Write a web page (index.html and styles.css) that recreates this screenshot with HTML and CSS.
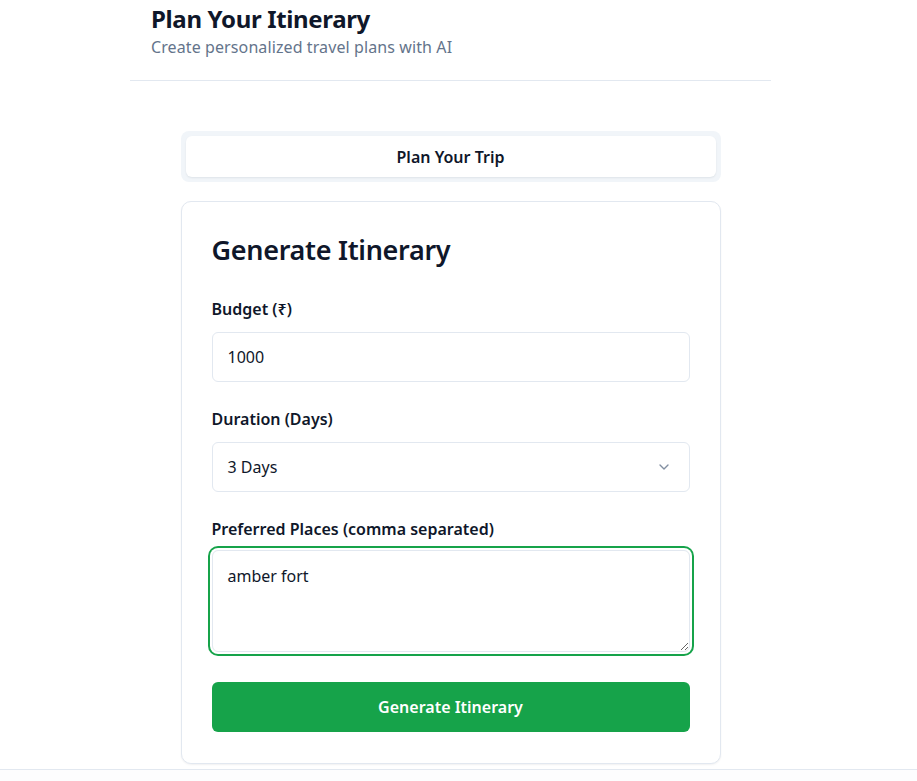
FILE: index.html
```html
<!DOCTYPE html>
<html lang="en">
<head>
<meta charset="utf-8">
<title>Plan Your Itinerary</title>
<link rel="stylesheet" href="styles.css">
</head>
<body>
<div class="page">
  <header class="header">
    <h1 class="header-title">Plan Your Itinerary</h1>
    <p class="header-sub">Create personalized travel plans with AI</p>
  </header>
  <main class="main">
    <div class="tabs">
      <button class="tab active">Plan Your Trip</button>
    </div>
    <section class="card">
      <h2 class="card-title">Generate Itinerary</h2>
      <div class="field">
        <label class="label">Budget (₹)</label>
        <div class="input">1000</div>
      </div>
      <div class="field">
        <label class="label">Duration (Days)</label>
        <div class="input select">
          <span>3 Days</span>
          <svg class="chev" width="16" height="16" viewBox="0 0 24 24" fill="none" stroke="currentColor" stroke-width="2" stroke-linecap="round" stroke-linejoin="round"><path d="m6 9 6 6 6-6"/></svg>
        </div>
      </div>
      <div class="field field-last">
        <label class="label label-tight">Preferred Places (comma separated)</label>
        <textarea class="textarea">amber fort</textarea>
      </div>
      <button class="btn">Generate Itinerary</button>
    </section>
  </main>
  <footer class="footer"></footer>
</div>
</body>
</html>
```
FILE: styles.css
```css
* { box-sizing: border-box; }
html, body { margin: 0; padding: 0; background: #ffffff; }
body {
  font-family: "Noto Sans", "Open Sans", sans-serif;
  color: #0f172a;
  width: 917px;
}
.page { width: 901px; }
.header {
  width: 641px;
  margin: 0 auto;
  padding: 3px 21px 21px;
  border-bottom: 1px solid #e2e8f0;
}
.header-title {
  margin: 0;
  font-size: 24px;
  line-height: 32px;
  font-weight: 700;
  letter-spacing: -0.35px;
  color: #0f172a;
}
.header-sub {
  margin: 0;
  font-size: 16px;
  line-height: 24px;
  color: #64748b;
  letter-spacing: 0.1px;
}
.main {
  width: 540px;
  margin: 50px auto 0;
}
.tabs {
  background: #f1f5f9;
  border-radius: 8px;
  padding: 5px;
  height: 51px;
  display: flex;
}
.tab {
  flex: 1;
  border: none;
  background: #fff;
  border-radius: 6px;
  font-family: inherit;
  font-size: 16px;
  font-weight: 600;
  color: #0f172a;
  box-shadow: 0 1px 2px rgba(15, 23, 42, 0.08);
}
.card {
  margin-top: 19px;
  border: 1px solid #e2e8f0;
  border-radius: 10px;
  padding: 30px 30px 31px;
  box-shadow: 0 1px 2px rgba(15, 23, 42, 0.06);
  background: #fff;
}
.card-title {
  margin: 0 0 29px;
  font-size: 27px;
  line-height: 36px;
  font-weight: 600;
  letter-spacing: -0.3px;
}
.field { margin-bottom: 25px; }
.label {
  display: block;
  font-size: 16px;
  line-height: 24px;
  font-weight: 600;
  margin-bottom: 11px;
}
.label-tight { margin-bottom: 9px; }
.input {
  height: 50px;
  border: 1px solid #e2e8f0;
  border-radius: 6px;
  padding: 0 15px;
  display: flex;
  align-items: center;
  font-size: 16px;
  color: #0f172a;
}
.select { justify-content: space-between; }
.chev { color: #64748b; opacity: 0.8; margin-right: 2px; }
.textarea {
  display: block;
  width: 100%;
  height: 102px;
  border: 1px solid #e2e8f0;
  border-radius: 6px;
  padding: 13px 15px;
  font-family: inherit;
  font-size: 16px;
  line-height: 24px;
  color: #0f172a;
  outline: none;
  box-shadow: 0 0 0 2px #ffffff, 0 0 0 4px #16a34a;
  resize: vertical;
}
.field-last { margin-bottom: 0; }
.btn {
  display: block;
  width: 100%;
  height: 50px;
  margin-top: 30px;
  border: none;
  border-radius: 6px;
  background: #16a34a;
  color: #fff;
  font-family: inherit;
  font-size: 16px;
  font-weight: 600;
}
.footer {
  margin-top: 5px;
  width: 917px;
  border-top: 1px solid #e2e8f0;
  height: 20px;
  background: #fdfdfe;
}
```
